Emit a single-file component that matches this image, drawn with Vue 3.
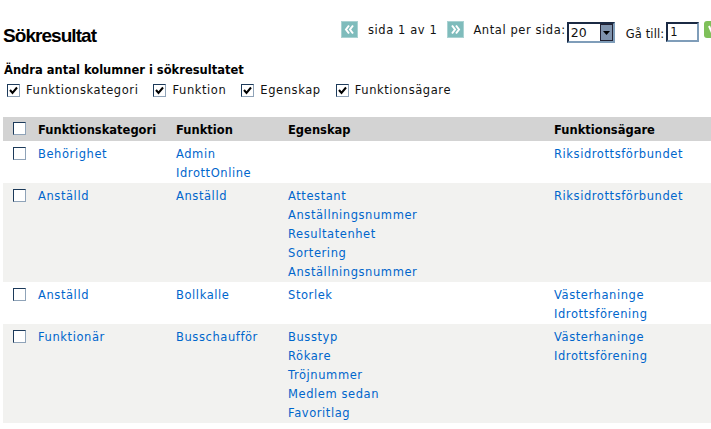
<script setup>
const columns = ['Funktionskategori', 'Funktion', 'Egenskap', 'Funktionsägare']

const rows = [
  { cat: 'Behörighet', fn: ['Admin', 'IdrottOnline'], props: [], owner: ['Riksidrottsförbundet'] },
  { cat: 'Anställd', fn: ['Anställd'], props: ['Attestant', 'Anställningsnummer', 'Resultatenhet', 'Sortering', 'Anställningsnummer'], owner: ['Riksidrottsförbundet'] },
  { cat: 'Anställd', fn: ['Bollkalle'], props: ['Storlek'], owner: ['Västerhaninge', 'Idrottsförening'] },
  { cat: 'Funktionär', fn: ['Busschaufför'], props: ['Busstyp', 'Rökare', 'Tröjnummer', 'Medlem sedan', 'Favoritlag'], owner: ['Västerhaninge', 'Idrottsförening'] },
]
</script>

<template>
  <div class="page">
    <div class="top">
      <h1 class="title">Sökresultat</h1>
      <div class="pager">
        <span class="pagebtn"><svg width="15" height="15" viewBox="0 0 15 15"><path d="M7 3.500L4 7.500l3 4M11 3.500L8 7.500l3 4" fill="none" stroke="#fff" stroke-width="2"/></svg></span>
        <span class="sida">sida 1 av 1</span>
        <span class="pagebtn"><svg width="15" height="15" viewBox="0 0 15 15"><path d="M4 3.500l3 4-3 4M8 3.500l3 4-3 4" fill="none" stroke="#fff" stroke-width="2"/></svg></span>
        <span class="antal">Antal per sida:</span>
        <span class="select">
          <span class="selval">20</span>
          <span class="arrow"><svg width="7" height="4" viewBox="0 0 7 4"><path d="M0 0h7L3.500 4z" fill="#000"/></svg></span>
        </span>
        <span class="goto">Gå till:</span>
        <span class="gotoinput">1</span>
        <span class="gobtn"><svg width="9" height="12" viewBox="0 0 9 12"><path d="M1 2l3.500 8L8 2" fill="none" stroke="#fff" stroke-width="2"/></svg></span>
      </div>
    </div>

    <div class="colchoice">
      <div class="choicetitle">Ändra antal kolumner i sökresultatet</div>
      <div class="choices">
        <label v-for="c in columns" :key="c" class="choice">
          <span class="cb"><svg width="9" height="9" viewBox="0 0 9 9"><path d="M1 4l2.500 3L8 1.500" fill="none" stroke="#000" stroke-width="2"/></svg></span>
          {{ c }}
        </label>
      </div>
    </div>

    <table class="results">
      <colgroup>
        <col class="c0" /><col class="c1" /><col class="c2" /><col class="c3" /><col />
      </colgroup>
      <thead>
        <tr>
          <th><span class="cb"></span></th>
          <th v-for="c in columns" :key="c">{{ c }}</th>
        </tr>
      </thead>
      <tbody>
        <tr v-for="(r, i) in rows" :key="i">
          <td><span class="cb"></span></td>
          <td><a>{{ r.cat }}</a></td>
          <td><a v-for="f in r.fn" :key="f">{{ f }}</a></td>
          <td><a v-for="(p, j) in r.props" :key="j">{{ p }}</a></td>
          <td><a v-for="o in r.owner" :key="o">{{ o }}</a></td>
        </tr>
      </tbody>
    </table>
  </div>
</template>

<style scoped>
.page {
  width: 711px;
  height: 429px;
  overflow: hidden;
  background: #fff;
  font-family: "DejaVu Sans", Verdana, sans-serif;
  font-size: 11.500px;
  letter-spacing: 0.58px;
  color: #111;
}

.top {
  display: flex;
  justify-content: space-between;
  height: 62px;
  padding-left: 3px;
}

.title {
  margin: 25px 0 0;
  font-family: "Liberation Sans", Arial, sans-serif;
  font-size: 19px;
  line-height: 21px;
  font-weight: bold;
  letter-spacing: -0.95px;
  color: #000;
}

.pager {
  display: flex;
  align-items: flex-start;
  width: 370px;
  flex-shrink: 0;
  padding-top: 21px;
  white-space: nowrap;
  line-height: 18px;
}

.pager > * {
  flex-shrink: 0;
}

.pagebtn {
  width: 17px;
  height: 17px;
  box-sizing: border-box;
  border: 1px solid #a9d2d2;
  background: #7fbcbc;
}

.sida {
  margin-left: 10px;
  margin-right: 10px;
}

.antal {
  margin-left: 9px;
  margin-right: 1px;
}

.select {
  display: flex;
  width: 48px;
  height: 21px;
  margin-top: 1px;
  border: 2px solid #1b2a44;
  border-right-color: #7f9db9;
  border-bottom-color: #7f9db9;
  box-sizing: border-box;
  background: #fff;
}

.selval {
  flex: 1;
  padding-left: 2px;
  font-size: 12.500px;
  letter-spacing: 0;
  line-height: 18px;
}

.arrow {
  display: flex;
  align-items: center;
  justify-content: center;
  width: 13px;
  border: 1px solid #223;
  box-sizing: border-box;
  background: #7f93ad;
}

.goto {
  margin-left: 11px;
  margin-top: 4px;
  letter-spacing: 0.1px;
}

.gotoinput {
  width: 33px;
  height: 20px;
  margin-top: 1px;
  margin-left: 2px;
  padding-left: 2px;
  box-sizing: border-box;
  border: 2px solid #1b2a44;
  border-right-color: #7f9db9;
  border-bottom-color: #7f9db9;
  line-height: 17px;
}

.gobtn {
  display: flex;
  align-items: center;
  justify-content: center;
  width: 17px;
  height: 17px;
  margin-left: 5px;
  border-radius: 3px;
  background: #7fc05a;
}

.colchoice {
  padding-left: 4px;
}

.choicetitle {
  font-weight: bold;
  letter-spacing: 0;
  line-height: 16px;
  color: #000;
}

.choices {
  display: flex;
  gap: 15px;
  padding-left: 3px;
  margin-top: 3px;
}

.choice {
  display: flex;
  align-items: center;
  gap: 6px;
  height: 18px;
}

.cb {
  display: inline-flex;
  align-items: center;
  justify-content: center;
  width: 13px;
  height: 13px;
  box-sizing: border-box;
  border: 1px solid #1c3a5a;
  border-right-color: #8fa3b8;
  border-bottom-color: #8fa3b8;
  background: #fff;
}

.results {
  width: 708px;
  margin: 18px 0 0 3px;
  border-collapse: collapse;
  table-layout: fixed;
}

.c0 { width: 35px; }
.c1 { width: 138px; }
.c2 { width: 112px; }
.c3 { width: 266px; }

th {
  height: 24px;
  padding: 1px 0 0;
  box-sizing: border-box;
  background: #d3d3d3;
  text-align: left;
  font-weight: bold;
  letter-spacing: 0;
  color: #000;
  white-space: nowrap;
}

th:first-child, td:first-child {
  padding-left: 10px;
}

td {
  padding: 4px 0 0;
  vertical-align: top;
  line-height: 19px;
}

td:first-child {
  padding-top: 6px;
  line-height: 13px;
}

tbody tr:nth-child(even) td {
  background: #f2f2f0;
}

a {
  display: block;
  color: #0066cc;
  white-space: nowrap;
}
</style>
